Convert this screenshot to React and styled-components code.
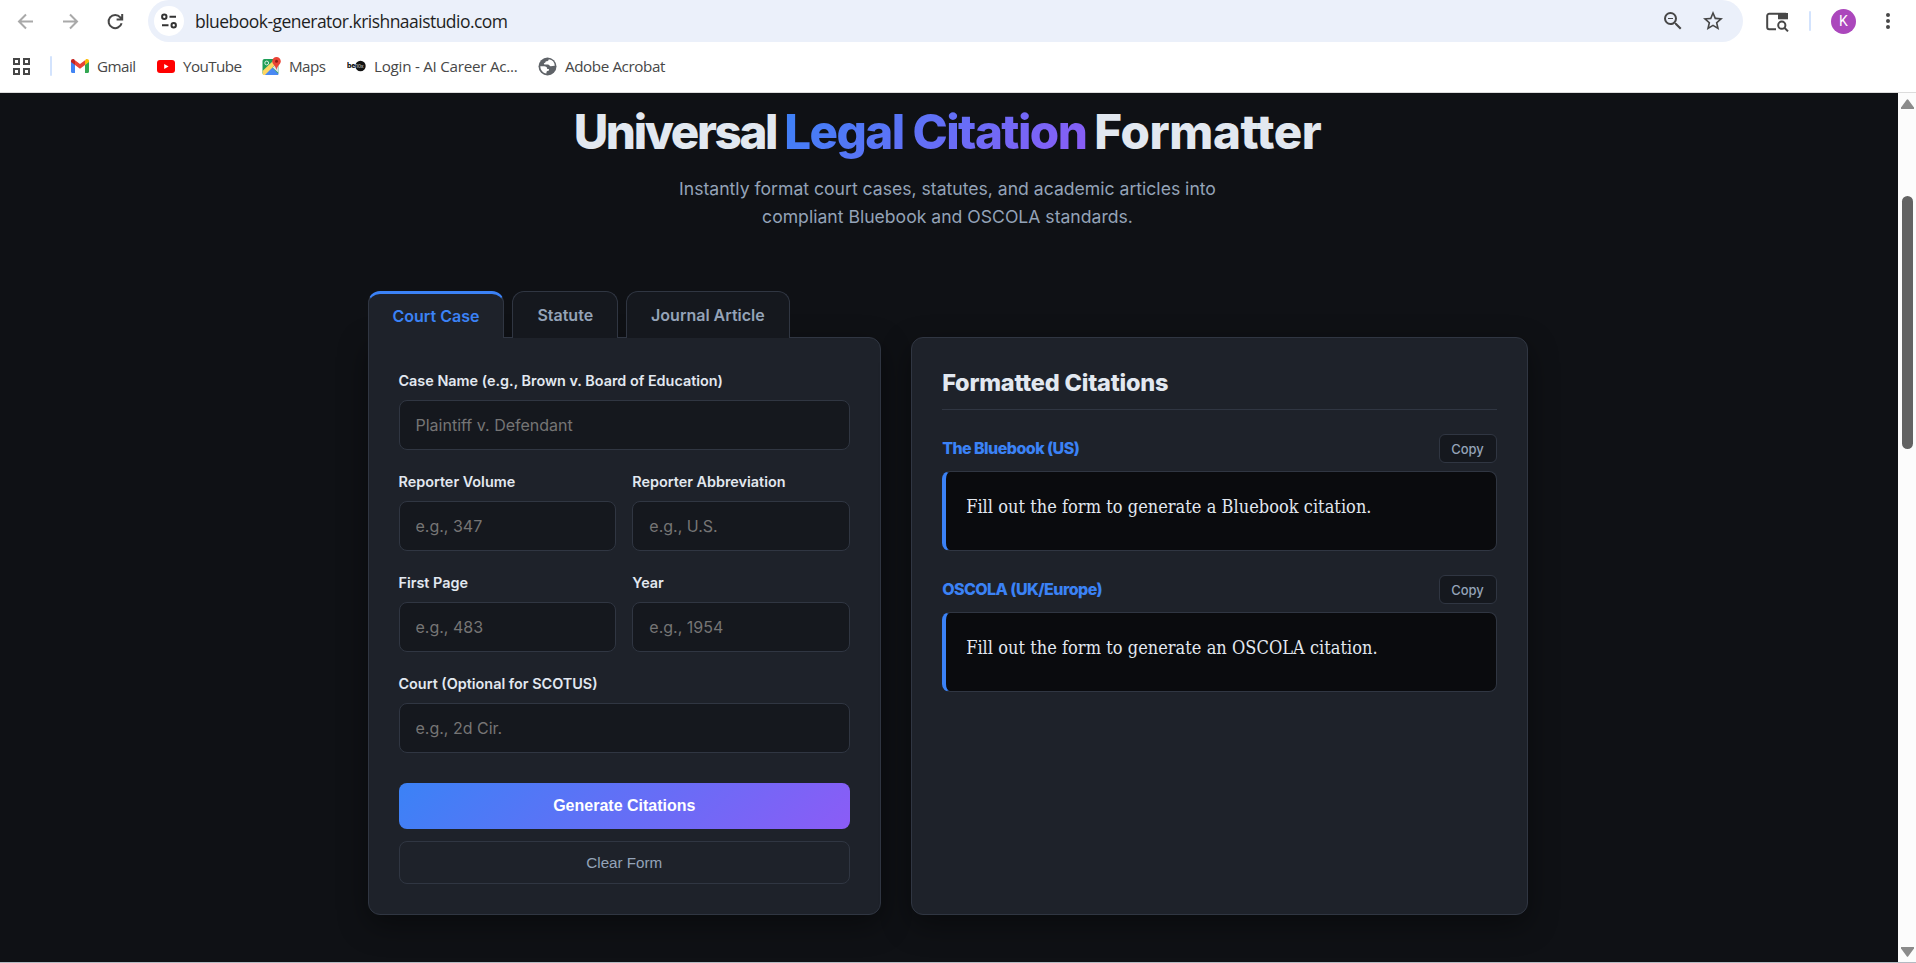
import React, { useState } from 'react';
import styled, { createGlobalStyle, css } from 'styled-components';
import { MdStarBorder, MdZoomOut } from 'react-icons/md';

const GlobalStyle = createGlobalStyle`
  *, *::before, *::after {
    box-sizing: border-box;
  }

  body {
    margin: 0;
    overflow: hidden;
    background: #ffffff;
    font-family: Inter, sans-serif;
  }
`;

const Window = styled.div`
  display: flex;
  flex-direction: column;
  width: 100%;
  height: 963px;
  border-bottom: 1px solid #b3bac2;
`;

/* browser chrome */

const Toolbar = styled.div`
  display: flex;
  align-items: center;
  flex: none;
  height: 42px;
  padding-left: 15px;
`;

const NavIcon = styled.svg`
  flex: none;
  width: 21px;
  height: 21px;
  margin-right: 24px;
  fill: none;
  stroke: ${(props) => (props.$active ? '#474747' : '#a9a9a9')};
  stroke-width: 2;
`;

const AddressBar = styled.div`
  display: flex;
  align-items: center;
  width: 1595px;
  height: 42px;
  margin-left: -2px;
  padding: 0 18px 0 6px;
  border-radius: 21px;
  background: #ebf0fa;
`;

const SiteInfo = styled.div`
  display: flex;
  align-items: center;
  justify-content: center;
  width: 30px;
  height: 30px;
  margin-right: 11px;
  border-radius: 50%;
  background: #ffffff;
`;

const Url = styled.span`
  flex: 1;
  color: #1f1f1f;
  font-family: 'Open Sans', 'Noto Sans', sans-serif;
  font-size: 17.5px;
  letter-spacing: -0.53px;
`;

const AddressAction = styled.span`
  display: flex;
  margin-left: 16px;
  color: #474747;
  font-size: 24px;
`;

const PanelIcon = styled.svg`
  flex: none;
  width: 24px;
  height: 24px;
  margin-left: 22px;
`;

const Divider = styled.span`
  flex: none;
  width: 2px;
  height: 20px;
  border-radius: 1px;
  background: #d3e3fd;
`;

const ToolbarDivider = styled(Divider)`
  margin-left: 20px;
`;

const Avatar = styled.div`
  display: flex;
  align-items: center;
  justify-content: center;
  width: 25px;
  height: 25px;
  margin-left: 20px;
  border-radius: 50%;
  background: #ab47bc;
  color: #ffffff;
  font-family: Roboto, sans-serif;
  font-size: 14px;
`;

const MenuDots = styled.svg`
  width: 6px;
  height: 18px;
  margin-left: 29px;
  fill: #474747;
`;

const Bookmarks = styled.div`
  display: flex;
  align-items: center;
  flex: none;
  height: 51px;
  padding: 0 0 2px 12px;
  border-bottom: 1px solid #dcdcdc;
`;

const AppsIcon = styled.svg`
  width: 18px;
  height: 18px;
  margin-right: 20px;
  fill: none;
  stroke: #474747;
  stroke-width: 2;
`;

const Bookmark = styled.div`
  display: flex;
  align-items: center;
  gap: 8px;
  width: ${(props) => props.$width}px;
  color: #474747;
  font-family: 'Open Sans', 'Noto Sans', sans-serif;
  font-size: 15.2px;
  letter-spacing: ${(props) => props.$tracking || -0.55}px;
  white-space: nowrap;

  &:first-of-type {
    margin-left: 19px;
  }

  svg {
    flex: none;
  }
`;

/* page */

const Viewport = styled.div`
  display: flex;
  flex: 1;
  min-height: 0;
`;

const Page = styled.main`
  flex: 1;
  overflow: hidden;
  padding-right: 3px;
  background: #0f1115;
  color: #e2e8f0;
`;

const Scrollbar = styled.div`
  display: flex;
  flex-direction: column;
  align-items: center;
  width: 18px;
  padding: 6px 0 5px;
  background: #fcfcfc;
`;

const ScrollArrow = styled.svg`
  flex: none;
  width: 13px;
  height: 10px;
  fill: #8b8b8b;
`;

const ScrollTrack = styled.div`
  flex: 1;
  padding-top: 87px;
`;

const ScrollThumb = styled.div`
  width: 11px;
  height: 253px;
  border-radius: 6px;
  background: #636363;
`;

const Hero = styled.header`
  display: flex;
  flex-direction: column;
  align-items: center;
  height: 198px;
  padding-top: 11px;
`;

const Title = styled.h1`
  margin: 0;
  font-size: 47.5px;
  font-weight: 800;
  line-height: 56px;
  letter-spacing: -2.35px;
  white-space: nowrap;
`;

const Accent = styled.span`
  background: linear-gradient(135deg, #3b82f6, #8b5cf6);
  background-clip: text;
  color: transparent;
  letter-spacing: -1.55px;
`;

const LastWord = styled.span`
  letter-spacing: -0.4px;
`;

const Subtitle = styled.p`
  width: 600px;
  margin: 15px 0 0;
  color: #94a3b8;
  font-size: 17.6px;
  line-height: 28.2px;
  text-align: center;
`;

const Columns = styled.div`
  display: grid;
  grid-template-columns: 1fr 1.2fr;
  gap: 30px;
  width: 1160px;
  margin: 0 auto;
`;

const FormColumn = styled.section`
  display: flex;
  flex-direction: column;
`;

const Tabs = styled.div`
  display: flex;
  gap: 8px;
  z-index: 1;
`;

const Tab = styled.button`
  height: 47px;
  margin-bottom: -1px;
  padding: 0 24px;
  border: 1px solid #303642;
  border-bottom: none;
  border-radius: 12px 12px 0 0;
  background: #15181e;
  color: #94a3b8;
  font-family: inherit;
  font-size: 16px;
  font-weight: 600;
  cursor: pointer;

  ${(props) =>
    props.$active &&
    css`
      border-top: 3px solid #3b82f6;
      background: #1e222a;
      color: #3b82f6;
    `}
`;

const Card = styled.div`
  height: 578px;
  padding: 30px;
  border: 1px solid #303642;
  border-radius: 12px;
  background: #1e222a;
  box-shadow: 0 10px 30px rgba(0, 0, 0, 0.4);
`;

const FormCard = styled(Card)`
  padding-top: 30.6px;
  border-top-left-radius: 0;
`;

const ResultCard = styled(Card)`
  margin-top: 46px;
`;

const FieldRow = styled.div`
  display: grid;
  grid-template-columns: repeat(${(props) => props.$columns || 1}, 1fr);
  gap: 16px;
  margin-bottom: 20px;
`;

const Field = styled.label`
  display: flex;
  flex-direction: column;
  gap: 8px;
  min-width: 0;
  font-size: 14.4px;
  font-weight: 600;
  line-height: 23.04px;
`;

const Input = styled.input`
  width: 100%;
  height: 50px;
  padding: 0 16px;
  border: 1px solid #303642;
  border-radius: 8px;
  outline: none;
  background: #15181e;
  color: #e2e8f0;
  font-family: inherit;
  font-size: 16px;

  &::placeholder {
    color: #757575;
  }
`;

const SubmitButton = styled.button`
  display: block;
  width: 100%;
  height: 46px;
  margin-top: 30px;
  border: none;
  border-radius: 8px;
  background: linear-gradient(135deg, #3b82f6, #8b5cf6);
  color: #ffffff;
  font-family: 'Liberation Sans', Arial, sans-serif;
  font-size: 16px;
  font-weight: 600;
  cursor: pointer;
`;

const ClearButton = styled.button`
  display: block;
  width: 100%;
  height: 43px;
  margin-top: 12px;
  border: 1px solid #303642;
  border-radius: 8px;
  background: transparent;
  color: #94a3b8;
  font-family: 'Liberation Sans', Arial, sans-serif;
  font-size: 15.2px;
  cursor: pointer;
`;

const ResultTitle = styled.h2`
  height: 42px;
  margin: 0 0 24px;
  border-bottom: 1px solid #303642;
  font-size: 23.5px;
  font-weight: 800;
  line-height: 30px;
  letter-spacing: -0.2px;
`;

const Result = styled.div`
  margin-bottom: 24px;
`;

const ResultHeader = styled.div`
  display: flex;
  align-items: center;
  justify-content: space-between;
  margin-bottom: 8px;
`;

const ResultName = styled.h3`
  margin: 0 0 2px;
  color: #3b82f6;
  font-size: 16px;
  font-weight: 800;
  letter-spacing: -0.55px;
`;

const CopyButton = styled.button`
  width: 58px;
  height: 29px;
  padding: 0;
  border: 1px solid #303642;
  border-radius: 6px;
  background: #15181e;
  color: #94a3b8;
  font-family: inherit;
  font-size: 13px;
  font-weight: 500;
  cursor: pointer;
`;

const Output = styled.div`
  height: 80px;
  padding: 20px;
  border: 1px solid #303642;
  border-left: 4px solid #3b82f6;
  border-radius: 8px;
  background: #0a0b0e;
  color: #e2e8f0;
  font-family: 'DejaVu Serif Condensed', 'DejaVu Serif', serif;
  font-stretch: condensed;
  font-size: 18px;
  line-height: 29px;
  letter-spacing: 0.04px;
  white-space: nowrap;
`;

const TABS = ['Court Case', 'Statute', 'Journal Article'];

const ROWS = [
  [{ name: 'caseName', label: 'Case Name (e.g., Brown v. Board of Education)', placeholder: 'Plaintiff v. Defendant' }],
  [
    { name: 'volume', label: 'Reporter Volume', placeholder: 'e.g., 347' },
    { name: 'reporter', label: 'Reporter Abbreviation', placeholder: 'e.g., U.S.' },
  ],
  [
    { name: 'page', label: 'First Page', placeholder: 'e.g., 483' },
    { name: 'year', label: 'Year', placeholder: 'e.g., 1954' },
  ],
  [{ name: 'court', label: 'Court (Optional for SCOTUS)', placeholder: 'e.g., 2d Cir.' }],
];

const RESULTS = [
  { name: 'The Bluebook (US)', text: 'Fill out the form to generate a Bluebook citation.' },
  { name: 'OSCOLA (UK/Europe)', text: 'Fill out the form to generate an OSCOLA citation.' },
];

function GmailIcon() {
  return (
    <svg width="18" height="14" viewBox="0 0 18 14">
      <path d="M0 2.2V12.8c0 .7.5 1.2 1.2 1.2H4V5.5z" fill="#4285f4" />
      <path d="M18 2.2V12.8c0 .7-.5 1.2-1.2 1.2H14V5.5z" fill="#34a853" />
      <path d="M14 1.3V6l4-3V2c0-1.7-2-2.5-3.3-1.4z" fill="#fbbc04" />
      <path d="M4 6V1.3L9 5l5-3.7V6L9 9.7z" fill="#ea4335" />
      <path d="M0 2v1l4 3V1.3L3.3.6C2-.5 0 .3 0 2z" fill="#c5221f" />
    </svg>
  );
}

function YouTubeIcon() {
  return (
    <svg width="18" height="13" viewBox="0 0 18 13">
      <rect width="18" height="13" rx="3" fill="#ff0000" />
      <path d="M7.2 3.9v5.2l4.4-2.6z" fill="#ffffff" />
    </svg>
  );
}

function MapsIcon() {
  return (
    <svg width="19" height="19" viewBox="0 0 19 19">
      <rect x="0.5" y="2" width="16" height="16" rx="2" fill="#1e9e57" />
      <path d="M1 17.5 9 9.5l7.5 7.5-.5 1H1.5z" fill="#4a89f3" />
      <path d="M.5 14 12 3l3 3L3 18H1z" fill="#fdd663" />
      <path d="M3.5 18 9.5 12l6 6z" fill="#4a89f3" />
      <path d="m10.5 10.5 6-5V16z" fill="#dfe3e8" />
      <circle cx="4.7" cy="6" r="1.9" fill="none" stroke="#d6f0df" strokeWidth="1" />
      <path d="M14.5 0a4.3 4.3 0 0 1 4.3 4.3c0 3-3.5 4.3-4.3 8.7-.8-4.4-4.3-5.7-4.3-8.7A4.3 4.3 0 0 1 14.5 0z" fill="#ea4335" />
      <circle cx="14.5" cy="4.3" r="1.5" fill="#8f1d15" />
    </svg>
  );
}

function BeTenIcon() {
  return (
    <svg width="19" height="12" viewBox="0 0 19 12">
      <circle cx="13.5" cy="6" r="5.2" fill="#111111" />
      <text x="0" y="8.2" fontFamily="Inter, sans-serif" fontSize="7" fontWeight="800" fill="#111111">be</text>
      <text x="8.8" y="8" fontFamily="Inter, sans-serif" fontSize="5" fontWeight="700" fill="#9a9a9a">10x</text>
    </svg>
  );
}

/* the default favicon: a grey globe with light land */
function GlobeIcon() {
  return (
    <svg width="19" height="19" viewBox="0 0 19 19">
      <circle cx="9.5" cy="9.5" r="9" fill="#5f6368" />
      <path d="M10.8 2.2c-.2 1.6-1.2 1.9-2.6 2.1-.9.2-.6 1.6-1.7 1.8-.8.2-.9 1.4.2 1.5h3.2c1.4 0 1.5 1.5 2.6 1.6 1.6.1 2.8-.6 4.3-.4A7.2 7.2 0 0 0 10.8 2.2z" fill="#ffffff" />
      <path d="M2.3 9.3h3.9c1.9 0 3 1.1 3 2.7h1.3c.7 0 .9 1.6-.2 1.8-1.7.2-1.9 1-1.9 2.8-3.6-.5-6.1-3.600-6.100-7.300z" fill="#ffffff" />
    </svg>
  );
}

const BOOKMARKS = [
  { label: 'Gmail', icon: <GmailIcon />, width: 86 },
  { label: 'YouTube', icon: <YouTubeIcon />, width: 105 },
  { label: 'Maps', icon: <MapsIcon />, width: 85 },
  { label: 'Login - AI Career Ac...', icon: <BeTenIcon />, width: 191, tracking: -0.25 },
  { label: 'Adobe Acrobat', icon: <GlobeIcon />, width: 140, tracking: -0.4 },
];

function BrowserChrome() {
  return (
    <>
      <Toolbar>
        <NavIcon viewBox="0 0 21 21">
          <path d="M18 10.5H4M11 3.5l-7 7 7 7" />
        </NavIcon>
        <NavIcon viewBox="0 0 21 21">
          <path d="M3 10.5h14M10 3.5l7 7-7 7" />
        </NavIcon>
        <NavIcon viewBox="0 0 21 21" $active>
          <path d="M16.6 12.2a6.6 6.6 0 1 1-1.3-5.9l1.9 2.2M17.2 3v5.6h-5.6" />
        </NavIcon>
        <AddressBar>
          <SiteInfo>
            <svg width="16" height="16" viewBox="0 0 16 16" fill="none" stroke="#333333" strokeWidth="2">
              <circle cx="3.3" cy="3.8" r="2.2" />
              <path d="M8.5 3.8H15M1 12.2h6.5" />
              <circle cx="12.7" cy="12.2" r="2.2" />
            </svg>
          </SiteInfo>
          <Url>bluebook-generator.krishnaaistudio.com</Url>
          <AddressAction>
            <MdZoomOut />
          </AddressAction>
          <AddressAction>
            <MdStarBorder />
          </AddressAction>
        </AddressBar>
        <PanelIcon viewBox="0 0 24 24">
          <path d="M11 20.2H4.2a2 2 0 0 1-2-2V6.8a2 2 0 0 1 2-2h16.6a1 1 0 0 1 1 1V10" fill="none" stroke="#474747" strokeWidth="2" />
          <path d="M13 4h10v6.300H13z" fill="#474747" />
          <circle cx="16.8" cy="16.2" r="3.6" fill="none" stroke="#474747" strokeWidth="2" />
          <path d="m19.4 18.8 3.6 3.6" stroke="#474747" strokeWidth="2" />
        </PanelIcon>
        <ToolbarDivider />
        <Avatar>K</Avatar>
        <MenuDots viewBox="0 0 6 18">
          <circle cx="3" cy="3" r="2" />
          <circle cx="3" cy="9" r="2" />
          <circle cx="3" cy="15" r="2" />
        </MenuDots>
      </Toolbar>
      <Bookmarks>
        <AppsIcon viewBox="0 0 18 18">
          <path d="M2 2h5v5H2zM12 2h5v5h-5zM2 12h5v5H2zM12 12h5v5h-5z" />
        </AppsIcon>
        <Divider />
        {BOOKMARKS.map((item) => (
          <Bookmark key={item.label} $width={item.width} $tracking={item.tracking}>
            {item.icon}
            {item.label}
          </Bookmark>
        ))}
      </Bookmarks>
    </>
  );
}

function CitationForm() {
  const [activeTab, setActiveTab] = useState('Court Case');
  const [values, setValues] = useState({});

  const handleChange = (e) => {
    setValues({ ...values, [e.target.name]: e.target.value });
  };

  return (
    <FormColumn>
      <Tabs>
        {TABS.map((tab) => (
          <Tab key={tab} $active={tab === activeTab} onClick={() => setActiveTab(tab)}>
            {tab}
          </Tab>
        ))}
      </Tabs>
      <FormCard>
        {ROWS.map((fields) => (
          <FieldRow key={fields[0].name} $columns={fields.length}>
            {fields.map((field) => (
              <Field key={field.name}>
                {field.label}
                <Input
                  type="text"
                  name={field.name}
                  placeholder={field.placeholder}
                  value={values[field.name] || ''}
                  onChange={handleChange}
                />
              </Field>
            ))}
          </FieldRow>
        ))}
        <SubmitButton type="button">Generate Citations</SubmitButton>
        <ClearButton type="button" onClick={() => setValues({})}>
          Clear Form
        </ClearButton>
      </FormCard>
    </FormColumn>
  );
}

function App() {
  return (
    <Window>
      <GlobalStyle />
      <BrowserChrome />
      <Viewport>
        <Page>
          <Hero>
            <Title>
              Universal <Accent>Legal Citation</Accent> <LastWord>Formatter</LastWord>
            </Title>
            <Subtitle>
              Instantly format court cases, statutes, and academic articles into compliant Bluebook and OSCOLA
              standards.
            </Subtitle>
          </Hero>
          <Columns>
            <CitationForm />
            <ResultCard>
              <ResultTitle>Formatted Citations</ResultTitle>
              {RESULTS.map((result) => (
                <Result key={result.name}>
                  <ResultHeader>
                    <ResultName>{result.name}</ResultName>
                    <CopyButton>Copy</CopyButton>
                  </ResultHeader>
                  <Output>{result.text}</Output>
                </Result>
              ))}
            </ResultCard>
          </Columns>
        </Page>
        <Scrollbar>
          <ScrollArrow viewBox="0 0 13 10">
            <path d="M5.7.8a1 1 0 0 1 1.6 0L12.6 8a1 1 0 0 1-.8 2H1.2a1 1 0 0 1-.8-2z" />
          </ScrollArrow>
          <ScrollTrack>
            <ScrollThumb />
          </ScrollTrack>
          <ScrollArrow viewBox="0 0 13 10">
            <path d="M5.7 9.2a1 1 0 0 0 1.6 0L12.6 2a1 1 0 0 0-.8-2H1.2a1 1 0 0 0-.8 2z" />
          </ScrollArrow>
        </Scrollbar>
      </Viewport>
    </Window>
  );
}

export default App;
